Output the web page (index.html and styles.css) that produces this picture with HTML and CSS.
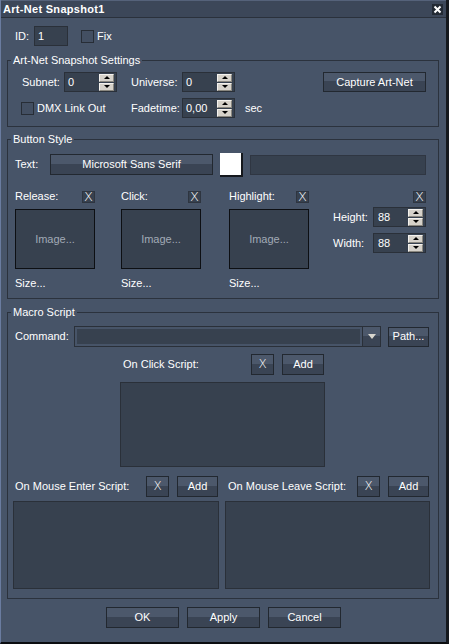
FILE: index.html
```html
<!DOCTYPE html>
<html lang="en">
<head>
<meta charset="utf-8">
<title>Art-Net Snapshot1</title>
<link rel="stylesheet" href="styles.css">
</head>
<body>
<div class="window">
  <div class="titlebar">
    <span class="title">Art-Net Snapshot1</span>
    <svg class="close" width="11" height="11" viewBox="0 0 11 11"><rect width="11" height="11" fill="#232a34"/><path d="M2.5 2.5 L8.5 8.5 M8.5 2.5 L2.5 8.5" stroke="#ffffff" stroke-width="2"/></svg>
  </div>

  <div class="id-row">
    <span class="lbl id-lbl">ID:</span>
    <div class="field id-field">1</div>
    <span class="check fix-check"></span>
    <span class="lbl">Fix</span>
  </div>

  <fieldset class="group g1">
    <legend>Art-Net Snapshot Settings</legend>
    <div class="g1-body">
      <div class="row">
        <span class="lbl subnet-lbl">Subnet:</span>
        <div class="spin"><span class="val">0</span><span class="arrows"><i class="up"></i><i class="down"></i></span></div>
        <span class="lbl mid-lbl">Universe:</span>
        <div class="spin"><span class="val">0</span><span class="arrows"><i class="up"></i><i class="down"></i></span></div>
        <div class="btn capture">Capture Art-Net</div>
      </div>
      <div class="row row2">
        <span class="dmx"><span class="check"></span><span class="lbl">DMX Link Out</span></span>
        <span class="lbl fade-lbl">Fadetime:</span>
        <div class="spin"><span class="val">0,00</span><span class="arrows"><i class="up"></i><i class="down"></i></span></div>
        <span class="lbl sec">sec</span>
      </div>
    </div>
  </fieldset>

  <fieldset class="group g2">
    <legend>Button Style</legend>
    <div class="g2-body">
      <div class="text-row">
        <span class="lbl text-lbl">Text:</span>
        <div class="btn font-btn">Microsoft Sans Serif</div>
        <div class="swatch"></div>
        <div class="field text-field"></div>
      </div>
      <div class="images">
        <div class="imgcol">
          <div class="imghead"><span class="lbl">Release:</span><span class="xbox">X</span></div>
          <div class="imgbox">Image...</div>
          <span class="lbl size">Size...</span>
        </div>
        <div class="imgcol c2">
          <div class="imghead"><span class="lbl">Click:</span><span class="xbox">X</span></div>
          <div class="imgbox">Image...</div>
          <span class="lbl size">Size...</span>
        </div>
        <div class="imgcol c3">
          <div class="imghead"><span class="lbl">Highlight:</span><span class="xbox">X</span></div>
          <div class="imgbox">Image...</div>
          <span class="lbl size">Size...</span>
        </div>
        <div class="dimcol">
          <div class="dimhead"><span class="xbox">X</span></div>
          <div class="dimrow first"><span class="lbl">Height:</span><div class="spin"><span class="val">88</span><span class="arrows"><i class="up"></i><i class="down"></i></span></div></div>
          <div class="dimrow"><span class="lbl">Width:</span><div class="spin"><span class="val">88</span><span class="arrows"><i class="up"></i><i class="down"></i></span></div></div>
        </div>
      </div>
    </div>
  </fieldset>

  <fieldset class="group g3">
    <legend>Macro Script</legend>
    <div class="g3-body">
      <div class="cmd-row">
        <span class="lbl cmd-lbl">Command:</span>
        <div class="combo"><div class="combo-field"></div><div class="combo-btn"><i></i></div></div>
        <div class="btn path-btn">Path...</div>
      </div>
      <div class="script click-script">
        <div class="script-head"><span class="lbl">On Click Script:</span><div class="btn xbtn">X</div><div class="btn addbtn">Add</div></div>
        <div class="script-area click-area"></div>
      </div>
      <div class="mouse-row">
        <div class="script enter-script">
          <div class="script-head"><span class="lbl">On Mouse Enter Script:</span><div class="btn xbtn">X</div><div class="btn addbtn">Add</div></div>
          <div class="script-area mouse-area"></div>
        </div>
        <div class="script leave-script">
          <div class="script-head"><span class="lbl">On Mouse Leave Script:</span><div class="btn xbtn">X</div><div class="btn addbtn">Add</div></div>
          <div class="script-area mouse-area"></div>
        </div>
      </div>
    </div>
  </fieldset>

  <div class="footer">
    <div class="btn fbtn">OK</div>
    <div class="btn fbtn">Apply</div>
    <div class="btn fbtn">Cancel</div>
  </div>
</div>
</body>
</html>
```

FILE: styles.css
```css
* { box-sizing: border-box; }

html, body {
  margin: 0;
  padding: 0;
  background: #475468;
}

body {
  font-family: "Liberation Sans", Arial, sans-serif;
  font-size: 11px;
  line-height: 13px;
  color: #ffffff;
}

.window {
  width: 449px;
  height: 644px;
  background: #475468;
  border-left: 1px solid #6a7ca0;
  border-right: 3px solid #15181d;
  border-bottom: 2px solid #0b0d10;
  display: flex;
  flex-direction: column;
}

.titlebar {
  height: 18px;
  background: #3c4759;
  border-top: 1px solid #55627a;
  border-bottom: 1px solid #2a313c;
  display: flex;
  align-items: center;
  justify-content: space-between;
  padding: 0 3px 0 2px;
}

.title {
  font-weight: bold;
  font-size: 11px;
  letter-spacing: 0.3px;
  color: #ffffff;
}

.close { display: block; }

.lbl { white-space: nowrap; }

/* ID row */
.id-row {
  margin-top: 8px;
  height: 20px;
  display: flex;
  align-items: center;
  padding-left: 14px;
}
.id-lbl { width: 19px; }
.field {
  background: #37414f;
  border: 1px solid #2a3039;
}
.id-field {
  width: 34px;
  height: 20px;
  padding-left: 3px;
  line-height: 18px;
}
.check {
  display: inline-block;
  width: 13px;
  height: 13px;
  border: 1px solid #272d36;
  background: #434f62;
}
.fix-check { margin-left: 13px; margin-right: 3px; }

/* Group boxes */
.group {
  margin: 0 0 0 6px;
  width: 432px;
  padding: 0;
  border: 1px solid #2b323d;
  min-inline-size: 0;
}
.group legend {
  font-size: 11px;
  line-height: 14px;
  padding: 0 2px;
  margin-left: 3px;
  color: #ffffff;
}
.g1 { margin-top: 7px; }
.g2 { margin-top: 5px; }
.g3 { margin-top: 6px; }

.g1-body {
  padding: 5px 12px 8px 13px;
  display: flex;
  flex-direction: column;
  gap: 6px;
}
.row {
  height: 20px;
  display: flex;
  align-items: center;
}
.subnet-lbl { width: 43px; padding-left: 1px; }
.mid-lbl { width: 51px; margin-left: 14px; }
.fade-lbl { width: 51px; }
.dmx {
  width: 110px;
  display: flex;
  align-items: center;
  gap: 3px;
}
.sec { margin-left: 10px; }

/* Spin box */
.spin {
  width: 53px;
  height: 20px;
  background: #37414f;
  border: 1px solid #2a3039;
  display: flex;
  align-items: center;
  padding: 0 2px 0 3px;
}
.spin .val { flex: 1; line-height: 18px; }
.arrows {
  display: flex;
  flex-direction: column;
  gap: 1px;
}
.arrows i {
  width: 15px;
  height: 8px;
  background: #d6d2ca;
  border-top: 1px solid #f4f2ee;
  border-left: 1px solid #f4f2ee;
  border-right: 1px solid #8a877f;
  border-bottom: 1px solid #8a877f;
  display: flex;
  align-items: center;
  justify-content: center;
}
.arrows i::after {
  content: "";
  width: 0;
  height: 0;
  border-left: 3px solid transparent;
  border-right: 3px solid transparent;
}
.arrows .up::after { border-bottom: 3px solid #000000; }
.arrows .down::after { border-top: 3px solid #000000; }

/* Buttons */
.btn {
  display: flex;
  align-items: center;
  justify-content: center;
  border: 1px solid #222830;
  background: linear-gradient(to bottom, #4c586b 0, #4c586b 47%, #3a4454 47%, #3a4454 100%);
  color: #ffffff;
  white-space: nowrap;
}
.capture {
  margin-left: auto;
  width: 103px;
  height: 20px;
}

/* Button style group */
.g2-body {
  padding: 6px 11px 8px 7px;
}
.text-row {
  height: 25px;
  display: flex;
  align-items: center;
}
.text-lbl { width: 35px; }
.font-btn { width: 163px; height: 21px; }
.swatch {
  margin-left: 7px;
  width: 23px;
  height: 24px;
  background: #ffffff;
  border-right: 2px solid #15181d;
  border-bottom: 2px solid #15181d;
}
.text-field {
  margin-left: 7px;
  width: 176px;
  height: 20px;
  border-color: #2f3642;
}

.images {
  margin-top: 13px;
  display: flex;
  align-items: flex-start;
}
.imgcol {
  width: 80px;
  display: flex;
  flex-direction: column;
}
.c2 { margin-left: 26px; }
.c3 { margin-left: 28px; }
.imghead, .dimhead {
  height: 13px;
  display: flex;
  align-items: center;
  justify-content: space-between;
}
.dimhead { justify-content: flex-end; }
.xbox {
  width: 13px;
  height: 12px;
  background: #37414f;
  border: 1px solid #2e3540;
  display: flex;
  align-items: center;
  justify-content: center;
  font-family: "DejaVu Sans", sans-serif;
  font-weight: 200;
  font-size: 13px;
  line-height: 10px;
  color: #ffffff;
}
.imgbox {
  margin-top: 6px;
  height: 60px;
  background: #37414f;
  border: 1px solid #0d0f13;
  display: flex;
  align-items: center;
  justify-content: center;
  color: #a2aab6;
}
.size {
  display: block;
  margin-top: 7px;
  line-height: 14px;
}
.dimcol {
  margin-left: 24px;
  width: 93px;
  display: flex;
  flex-direction: column;
}
.dimrow {
  margin-top: 6px;
  height: 20px;
  display: flex;
  align-items: center;
  justify-content: space-between;
}
.dimrow.first { margin-top: 4px; }
.dimrow .spin { padding-left: 4px; }

/* Macro script group */
.g3-body {
  padding: 7px 7px 9px 5px;
}
.cmd-row {
  height: 21px;
  display: flex;
  align-items: center;
}
.cmd-lbl { width: 61px; padding-left: 2px; }
.combo {
  width: 307px;
  height: 21px;
  border: 1px solid #2a3039;
  display: flex;
}
.combo-field {
  flex: 1;
  margin: 2px;
  background: #37414f;
}
.combo-btn {
  width: 18px;
  border-left: 1px solid #2a3039;
  background: linear-gradient(to bottom, #4c586b 0, #4c586b 45%, #3a4454 45%, #3a4454 100%);
  display: flex;
  align-items: center;
  justify-content: center;
}
.combo-btn i {
  width: 0;
  height: 0;
  border-left: 4px solid transparent;
  border-right: 4px solid transparent;
  border-top: 5px solid #d8d6ce;
}
.path-btn {
  margin-left: 7px;
  width: 41px;
  height: 20px;
}

.script {
  display: flex;
  flex-direction: column;
}
.click-script {
  margin-left: 107px;
  margin-top: 7px;
  width: 205px;
}
.script-head {
  height: 21px;
  display: flex;
  align-items: center;
}
.script-head .lbl {
  flex: 1;
  padding-left: 3px;
}
.xbtn {
  width: 23px;
  height: 21px;
  margin-right: 8px;
  font-family: "DejaVu Sans", sans-serif;
  font-weight: 200;
  font-size: 12px;
}
.addbtn {
  width: 42px;
  height: 21px;
  margin-right: 1px;
}
.script-area {
  background: #37414f;
  border: 1px solid #2a3039;
}
.click-area {
  margin-top: 7px;
  height: 85px;
}
.mouse-row {
  margin-top: 9px;
  display: flex;
}
.enter-script { width: 206px; }
.enter-script .script-head .lbl { padding-left: 2px; }
.enter-script .addbtn { width: 41px; }
.leave-script { width: 205px; margin-left: 6px; }
.leave-script .addbtn { width: 41px; }
.mouse-area {
  margin-top: 4px;
  height: 88px;
}

/* Footer */
.footer {
  margin-top: 8px;
  display: flex;
  justify-content: center;
  gap: 8px;
}
.fbtn {
  width: 73px;
  height: 21px;
}
```
